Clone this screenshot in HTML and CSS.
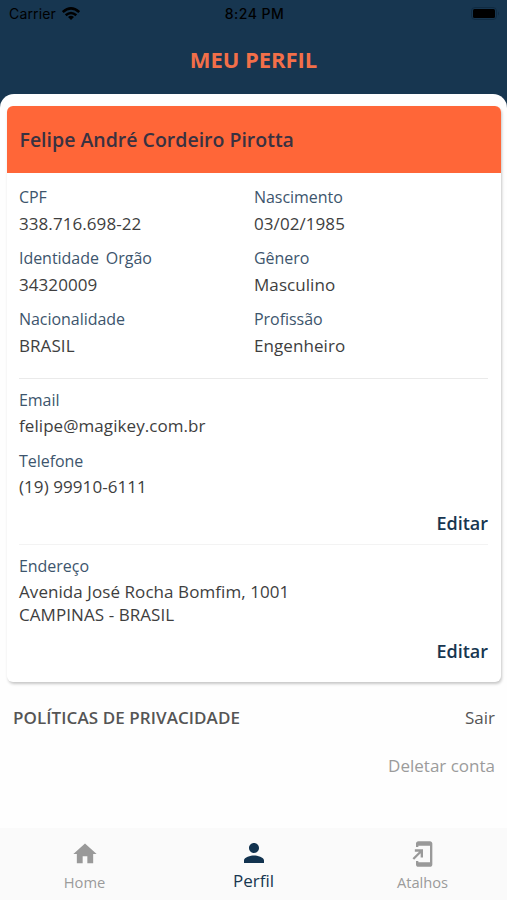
FILE: index.html
```html
<!DOCTYPE html>
<html lang="pt-BR">
<head>
<meta charset="utf-8">
<title>Meu Perfil</title>
<link rel="stylesheet" href="styles.css">
</head>
<body>
<div class="app">
  <header class="top">
    <div class="status">
      <div class="carrier"><span>Carrier</span>
        <svg class="wifi" viewBox="0 0 18 13" width="18" height="13"><g fill="none" stroke="#000" stroke-width="2.6"><path d="M.8 5.1Q9-2.300 17.200 5.100"/><path d="M3.700 8.300Q9 3.700 14.300 8.300"/></g><path d="M6 10.100Q9 7.400 12 10.100L9 13Z"/></svg>
      </div>
      <div class="clock">8:24 PM</div>
      <svg class="battery" viewBox="0 0 29 13" width="29" height="13"><rect x=".5" y=".5" width="25" height="12" rx="3.5" fill="none" stroke="#102b42"/><rect x="2" y="2" width="22" height="9" rx="1.500"/><path d="M27 4.500q2 2 0 4z" fill="#102b42"/></svg>
    </div>
    <h1 class="title">MEU PERFIL</h1>
  </header>
  <main class="sheet">
    <section class="card">
      <h2 class="name">Felipe André Cordeiro Pirotta</h2>
      <div class="details">
        <div class="grid">
          <div class="field"><div class="label">CPF</div><div class="value">338.716.698-22</div></div>
          <div class="field"><div class="label">Nascimento</div><div class="value">03/02/1985</div></div>
          <div class="field"><div class="label issuer"><span>Identidade</span><span>Orgão</span></div><div class="value">34320009</div></div>
          <div class="field"><div class="label">Gênero</div><div class="value">Masculino</div></div>
          <div class="field"><div class="label">Nacionalidade</div><div class="value">BRASIL</div></div>
          <div class="field"><div class="label">Profissão</div><div class="value">Engenheiro</div></div>
        </div>
        <div class="contact">
          <div class="field"><div class="label">Email</div><div class="value">felipe@magikey.com.br</div></div>
          <div class="field"><div class="label">Telefone</div><div class="value">(19) 99910-6111</div></div>
          <div class="edit">Editar</div>
        </div>
        <div class="address">
          <div class="field"><div class="label">Endereço</div><div class="value">Avenida José Rocha Bomfim, 1001<br>CAMPINAS - BRASIL</div></div>
          <div class="edit">Editar</div>
        </div>
      </div>
    </section>
    <div class="links">
      <span class="privacy">POLÍTICAS DE PRIVACIDADE</span>
      <span class="logout">Sair</span>
    </div>
    <div class="delete">Deletar conta</div>
  </main>
  <nav class="tabs">
    <div class="tab">
      <svg viewBox="0 0 24 24" width="28" height="28"><path d="M10 20v-6h4v6h5v-8h3L12 3 2 12h3v8z"/></svg>
      <span>Home</span>
    </div>
    <div class="tab active">
      <svg viewBox="0 0 24 24" width="30" height="30"><path d="M12 12c2.21 0 4-1.79 4-4s-1.79-4-4-4-4 1.79-4 4 1.79 4 4 4zm0 2c-2.67 0-8 1.34-8 4v2h16v-2c0-2.66-5.33-4-8-4z"/></svg>
      <span>Perfil</span>
    </div>
    <div class="tab">
      <svg viewBox="0 0 24 24" width="28" height="28"><path d="M18 1.01L8 1c-1.1 0-2 .9-2 2v3h2V5h10v14H8v-1H6v3c0 1.1.9 2 2 2h10c1.1 0 2-.9 2-2V3c0-1.1-.9-1.99-2-1.99zM10 15h2V8H5v2h3.590L3 15.590 4.410 17 10 11.410V15z"/></svg>
      <span>Atalhos</span>
    </div>
  </nav>
</div>
</body>
</html>
```
FILE: styles.css
```css
* { box-sizing: border-box; margin: 0; padding: 0; }
body { font-family: "Open Sans", "Noto Sans", sans-serif; background: #173650; }
.app { width: 507px; height: 900px; display: flex; flex-direction: column; overflow: hidden; }
.top { height: 94px; flex: none; }
.status { height: 27px; display: grid; grid-template-columns: 1fr auto 1fr; align-items: center; padding: 0 7px 0 9px; font-family: Inter, "Liberation Sans", sans-serif; color: #000; font-size: 14px; }
.carrier { display: flex; align-items: center; gap: 6px; letter-spacing: .15px; }
.clock { font-weight: 500; letter-spacing: .45px; }
.battery { justify-self: end; }
.title { color: #f26f49; font-size: 22px; line-height: 30px; font-weight: 700; text-align: center; margin-top: 17px; letter-spacing: -.05px; }
.sheet { flex: 1; background: #fefefe; border-radius: 14px 14px 0 0; padding: 12px 6px 0 7px; }
.card { height: 576px; border-radius: 6px; background: #fff; box-shadow: 1px 2px 3px rgba(0,0,0,.22); overflow: hidden; }
.name { height: 67px; line-height: 68px; padding-left: 12.5px; background: #ff6638; color: #393241; font-size: 19.5px; font-weight: 600; }
.details { padding: 13px 13px 0 12px; }
.grid { display: grid; grid-template-columns: 235px 1fr; row-gap: 12.5px; height: 193px; align-content: start; border-bottom: 1px solid #eaeaea; }
.field { display: flex; flex-direction: column; gap: 3.5px; }
.label { color: #3d556d; font-size: 16px; line-height: 22px; letter-spacing: -.04px; }
.issuer { display: flex; gap: 7px; }
.value { color: #3e3e3e; font-size: 17px; line-height: 23px; letter-spacing: .07px; }
.contact { display: flex; flex-direction: column; gap: 13px; height: 166px; padding-top: 9.5px; border-bottom: 1px solid #f3f3f3; }
.contact .field, .address .field { gap: 3px; }
.edit { align-self: flex-end; color: #173650; font-size: 18px; font-weight: 600; line-height: 24px; }
.address { display: flex; flex-direction: column; gap: 13px; padding-top: 10px; }
.links { display: flex; justify-content: space-between; padding: 24px 6px 0 6px; line-height: 24px; font-size: 17px; color: #555; }
.privacy { font-weight: 550; letter-spacing: .08px; }
.delete { padding: 24px 6px 0; text-align: right; color: #9b9b9b; font-size: 17px; line-height: 24px; }
.tabs { flex: none; height: 72px; background: #fafafa; display: grid; grid-template-columns: repeat(3, 1fr); }
.tab { display: flex; flex-direction: column; align-items: center; padding-top: 12px; color: #9b9b9b; fill: #999; font-size: 14.7px; }
.tab span { line-height: 28px; }
.active { padding-top: 10px; color: #173650; fill: #12334f; font-size: 17px; }
.active span { line-height: 26px; }
```
